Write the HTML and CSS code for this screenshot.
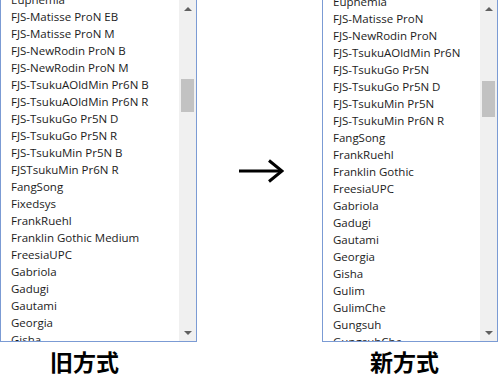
FILE: index.html
```html
<!DOCTYPE html>
<html lang="ja">
<head>
<meta charset="utf-8">
<link rel="stylesheet" href="styles.css">
</head>
<body>
<div class="stage">
  <div class="col col-old">
    <div class="listbox">
      <ul class="items items-old">
        <li>Euphemia</li>
        <li>FJS-Matisse ProN EB</li>
        <li>FJS-Matisse ProN M</li>
        <li>FJS-NewRodin ProN B</li>
        <li>FJS-NewRodin ProN M</li>
        <li>FJS-TsukuAOldMin Pr6N B</li>
        <li>FJS-TsukuAOldMin Pr6N R</li>
        <li>FJS-TsukuGo Pr5N D</li>
        <li>FJS-TsukuGo Pr5N R</li>
        <li>FJS-TsukuMin Pr5N B</li>
        <li>FJSTsukuMin Pr6N R</li>
        <li>FangSong</li>
        <li>Fixedsys</li>
        <li>FrankRuehl</li>
        <li>Franklin Gothic Medium</li>
        <li>FreesiaUPC</li>
        <li>Gabriola</li>
        <li>Gadugi</li>
        <li>Gautami</li>
        <li>Georgia</li>
        <li>Gisha</li>
      </ul>
      <div class="scrollbar">
        <div class="sb-btn"><span class="tri tri-up"></span></div>
        <div class="sb-track"><div class="sb-thumb" style="margin-top:62px;height:33px"></div></div>
        <div class="sb-btn"><span class="tri tri-down"></span></div>
      </div>
    </div>
    <div class="label label-old">旧方式</div>
  </div>

  <div class="middle">
    <svg class="arrow" width="46" height="24" viewBox="0 0 46 24">
      <path d="M1 12 H44" stroke="#000" stroke-width="3" fill="none"/>
      <path d="M31 1.5 L44 12 L31 22.5" stroke="#000" stroke-width="3" fill="none"/>
    </svg>
  </div>

  <div class="col col-new">
    <div class="listbox">
      <ul class="items items-new">
        <li>Euphemia</li>
        <li>FJS-Matisse ProN</li>
        <li>FJS-NewRodin ProN</li>
        <li>FJS-TsukuAOldMin Pr6N</li>
        <li>FJS-TsukuGo Pr5N</li>
        <li>FJS-TsukuGo Pr5N D</li>
        <li>FJS-TsukuMin Pr5N</li>
        <li>FJS-TsukuMin Pr6N R</li>
        <li>FangSong</li>
        <li>FrankRuehl</li>
        <li>Franklin Gothic</li>
        <li>FreesiaUPC</li>
        <li>Gabriola</li>
        <li>Gadugi</li>
        <li>Gautami</li>
        <li>Georgia</li>
        <li>Gisha</li>
        <li>Gulim</li>
        <li>GulimChe</li>
        <li>Gungsuh</li>
        <li>GungsuhChe</li>
      </ul>
      <div class="scrollbar">
        <div class="sb-btn"><span class="tri tri-up"></span></div>
        <div class="sb-track"><div class="sb-thumb" style="margin-top:64px;height:36px"></div></div>
        <div class="sb-btn"><span class="tri tri-down"></span></div>
      </div>
    </div>
    <div class="label label-new">新方式</div>
  </div>
</div>
</body>
</html>
```

FILE: styles.css
```css
html, body {
  margin: 0;
  padding: 0;
  background: #fff;
  overflow: hidden;
}

.stage {
  display: flex;
  width: 498px;
  height: 378px;
}

.col {
  display: flex;
  flex-direction: column;
}

.col-old { width: 197px; }
.col-new { width: 176px; }

.middle {
  width: 125px;
  height: 342px;
  display: flex;
  align-items: center;
  justify-content: center;
  padding-left: 3px;
  box-sizing: border-box;
}

.arrow { display: block; }

.listbox {
  display: flex;
  height: 342px;
  box-sizing: border-box;
  border: 1px solid #7b9bd4;
  border-top: 0;
  overflow: hidden;
  background: #fff;
}

.items {
  flex: 1;
  margin: 0;
  padding: 0 0 0 10px;
  list-style: none;
  overflow: hidden;
  font-family: "Open Sans", "Noto Sans", sans-serif;
  font-size: 11.5px;
  line-height: 17px;
  color: #1c1c1c;
  white-space: nowrap;
}

.items-old li:first-child { margin-top: -9px; }
.items-new li:first-child { margin-top: -7px; }

.scrollbar {
  width: 17px;
  flex: none;
  display: flex;
  flex-direction: column;
  background: #f0f0f0;
}

.sb-btn {
  height: 17px;
  flex: none;
  display: flex;
  align-items: center;
  justify-content: center;
}

.sb-track {
  flex: 1;
  display: flex;
  flex-direction: column;
}

.sb-thumb {
  margin-left: 2px;
  margin-right: 2px;
  background: #c2c2c2;
}

.tri {
  width: 0;
  height: 0;
  border-left: 4px solid transparent;
  border-right: 4px solid transparent;
}
.tri-up { border-bottom: 4px solid #606060; }
.tri-down { border-top: 4px solid #606060; }

.label {
  font-family: "Noto Sans CJK JP", sans-serif;
  font-weight: bold;
  font-size: 23px;
  line-height: 30px;
  color: #000;
  margin-top: 4px;
}
.label-old { padding-left: 50px; }
.label-new { padding-left: 48px; }
```
